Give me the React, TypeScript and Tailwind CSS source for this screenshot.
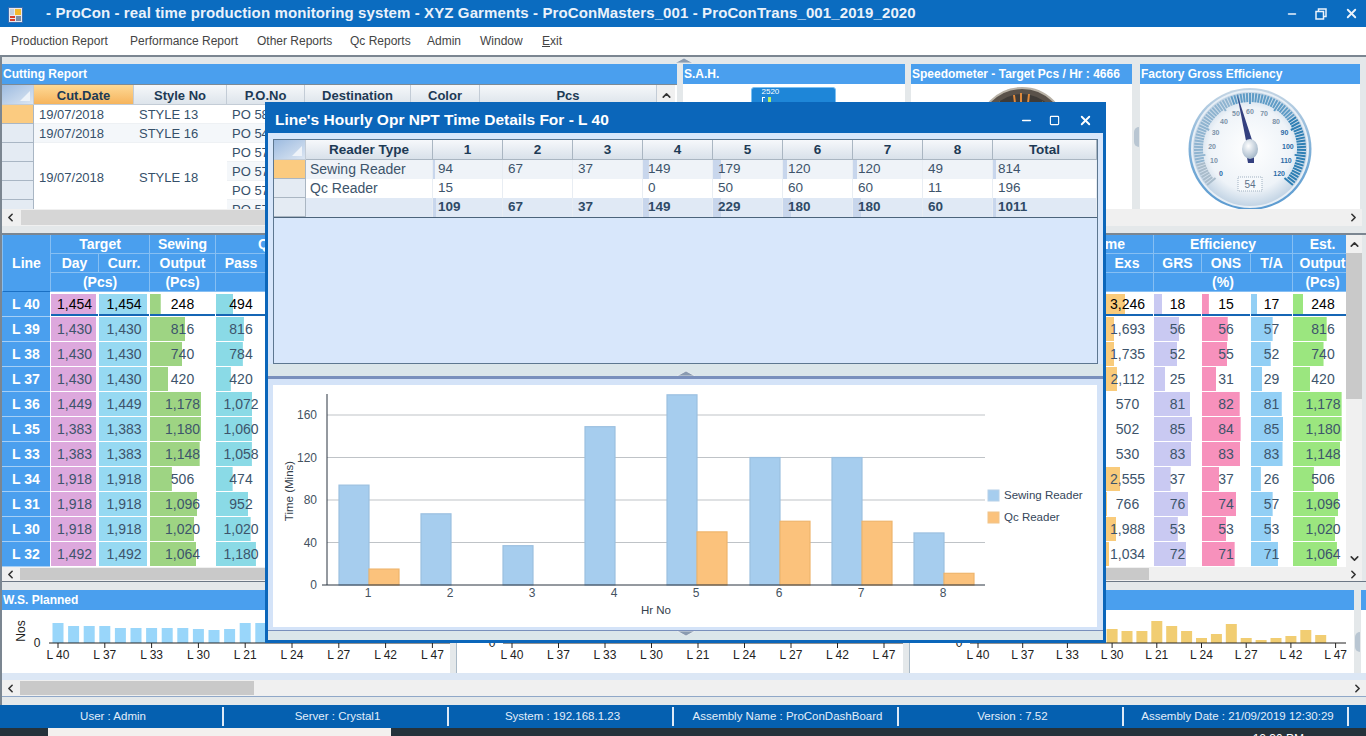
import { ChevronDown, ChevronLeft, ChevronRight, ChevronUp, Minus, Square, X } from 'lucide-react';

const lines = ['L 40', 'L 39', 'L 38', 'L 37', 'L 36', 'L 35', 'L 33', 'L 34', 'L 31', 'L 30', 'L 32'];
const day = [1454, 1430, 1430, 1430, 1449, 1383, 1383, 1918, 1918, 1918, 1492];
const sewing = [248, 816, 740, 420, 1178, 1180, 1148, 506, 1096, 1020, 1064];
const pass = [494, 816, 784, 420, 1072, 1060, 1058, 474, 952, 1020, 1180];
const exs = [3246, 1693, 1735, 2112, 570, 502, 530, 2555, 766, 1988, 1034];
const grs = [18, 56, 52, 25, 81, 85, 83, 37, 76, 53, 72];
const ons = [15, 56, 55, 31, 82, 84, 83, 37, 74, 53, 71];
const ta = [17, 57, 52, 29, 81, 85, 83, 26, 57, 53, 71];

const hourly = {
  sewing: [94, 67, 37, 149, 179, 120, 120, 49, 814],
  qc: [15, null, null, 0, 50, 60, 60, 11, 196],
  total: [109, 67, 37, 149, 229, 180, 180, 60, 1011],
};

const menus = ['Production Report', 'Performance Report', 'Other Reports', 'Qc Reports', 'Admin', 'Window'];
const statusItems = ['User : Admin', 'Server : Crystal1', 'System : 192.168.1.23', 'Assembly Name : ProConDashBoard', 'Version : 7.52', 'Assembly Date : 21/09/2019 12:30:29'];
const axisLabels = ['L 40', 'L 37', 'L 33', 'L 30', 'L 21', 'L 24', 'L 27', 'L 42', 'L 47'];

const wsBars = [20, 17, 17, 17, 15, 15, 15, 15, 15, 14, 13, 14, 20, 20, 18, 18, 16, 16, 15, 15, 15, 14, 14, 14, 14, 14, 14];
const thirdBars = [10, 10, 10, 10, 10, 10, 10, 10, 10, 14, 12, 12, 22, 17, 12, 5, 9, 19, 5, 3, 5, 7, 13, 8];

function fmt(n: number) {
  return n.toLocaleString('en-US');
}

function barFill(color: string, px: number) {
  return { background: `linear-gradient(${color},${color}) no-repeat left top / ${px}px 100%` };
}

function PanelTitle({ children }: { children?: React.ReactNode }) {
  return <div className="h-[20px] bg-[#4a9fee] text-white text-[12px] font-bold leading-[20px] pl-px whitespace-nowrap overflow-hidden">{children}</div>;
}

function HScroll({ thumbLeft, thumbWidth, thumbColor = 'bg-[#c9c9c9]', height = 'h-[17px]' }: { thumbLeft: number; thumbWidth: number; thumbColor?: string; height?: string }) {
  return (
    <div className={`${height} bg-[#f0f0f0] flex items-center text-[#333]`}>
      <div className="w-[17px] flex justify-center"><ChevronLeft size={13} strokeWidth={3} /></div>
      <div className="flex-1 flex h-full py-px">
        <div style={{ width: thumbLeft }} />
        <div className={thumbColor} style={{ width: thumbWidth }} />
      </div>
      <div className="w-[17px] flex justify-center"><ChevronRight size={13} strokeWidth={3} /></div>
    </div>
  );
}

function SideTab() {
  return (
    <div className="h-full flex items-center justify-center w-full">
      <div className="w-[5px] h-[20px] bg-[#b9c6d2] rounded-l-full" />
    </div>
  );
}

function SplitArrow({ down = false }: { down?: boolean }) {
  return (
    <svg width="20" height="6" viewBox="0 0 20 6">
      <path d={down ? 'M1 0 L10 5 L19 0 Z' : 'M1 6 L10 1 L19 6 Z'} fill="#8a9bb0" stroke="#f4f6f8" strokeWidth="0.7" />
    </svg>
  );
}

function CutHeader({ children, active = false }: { children?: React.ReactNode; active?: boolean }) {
  return (
    <div className={`h-[20px] text-center text-[13px] font-bold leading-[21px] border-r border-[#c3ccd6] border-b ${active ? 'bg-gradient-to-b from-[#fdd995] to-[#f6b45c] text-[#1d3a55]' : 'bg-gradient-to-b from-[#f6f8fa] to-[#dde4eb] text-[#1d3a55]'}`}>
      {children}
    </div>
  );
}

function RowHeadCorner() {
  return (
    <div className="bg-gradient-to-br from-[#9dbbe0] to-[#dce6f2] border-r border-b border-[#c3ccd6] flex items-end justify-end pr-[3px] pb-[3px]">
      <svg width="10" height="10" viewBox="0 0 10 10"><path d="M10 0 V10 H0 Z" fill="#eef3f9" /></svg>
    </div>
  );
}

function CuttingGrid() {
  const cell = 'h-[19px] text-[13px] leading-[19px] text-[#36506a] pl-[5px] border-b border-[#eef1f4] whitespace-nowrap overflow-hidden';
  const head = 'h-[19px] bg-[#e4ebf3] border-r border-b border-[#a9b6c4]';
  return (
    <div className="flex-1 min-h-0 overflow-hidden bg-white grid grid-cols-[32px_100px_93px_78px_106px_69px_177px_18px] auto-rows-min">
      <RowHeadCorner />
      <CutHeader active>Cut.Date</CutHeader>
      <CutHeader>Style No</CutHeader>
      <CutHeader>P.O.No</CutHeader>
      <CutHeader>Destination</CutHeader>
      <CutHeader>Color</CutHeader>
      <CutHeader>Pcs</CutHeader>
      <div className="h-[20px] bg-[#f0f0f0] flex items-center justify-center text-[#333]"><ChevronUp size={13} strokeWidth={3} /></div>

      <div className="h-[19px] bg-[#fbcb80] border-r border-b border-[#a9b6c4]" />
      <div className={cell}>19/07/2018</div>
      <div className={cell}>STYLE 13</div>
      <div className={cell}>PO 5812</div>
      <div className="col-span-4" />

      <div className={head} />
      <div className={`${cell} bg-[#f4f7fa]`}>19/07/2018</div>
      <div className={`${cell} bg-[#f4f7fa]`}>STYLE 16</div>
      <div className={`${cell} bg-[#f4f7fa]`}>PO 5401</div>
      <div className="col-span-4" />

      <div className={head} />
      <div className="row-span-4 text-[13px] text-[#36506a] pl-[5px] pb-[6px] flex items-center">19/07/2018</div>
      <div className="row-span-4 text-[13px] text-[#36506a] pl-[5px] pb-[6px] flex items-center">STYLE 18</div>
      <div className={cell}>PO 5701</div>
      <div className="col-span-4" />
      <div className={head} />
      <div className={`${cell} bg-[#f4f7fa]`}>PO 5702</div>
      <div className="col-span-4" />
      <div className={head} />
      <div className={cell}>PO 5703</div>
      <div className="col-span-4" />
      <div className={head} />
      <div className={`${cell} bg-[#f4f7fa]`}>PO 5704</div>
      <div className="col-span-4" />
    </div>
  );
}

function Gauge() {
  const labels = [0, 10, 20, 30, 40, 50, 60, 70, 80, 90, 100, 110, 120];
  const cx = 62;
  const cy = 63;
  const polar = (v: number, r: number) => {
    const a = ((-130 + (v * 260) / 120) * Math.PI) / 180;
    return { x: cx + r * Math.sin(a), y: cy - r * Math.cos(a) };
  };
  const ticks = Array.from({ length: 81 }, (_, i) => i * 1.5);
  const tickColor = (v: number) => {
    if (v < 12) return '#a9bccb';
    if (v < 50) return '#8fb4d0';
    if (v < 85) return '#5f9cc6';
    return '#2f7fb4';
  };
  return (
    <svg width="124" height="124" viewBox="0 0 124 124">
      <defs>
        <radialGradient id="gaugeFace" cx="50%" cy="50%" r="52%">
          <stop offset="0%" stopColor="#ffffff" />
          <stop offset="70%" stopColor="#eef3f8" />
          <stop offset="100%" stopColor="#bdd0e2" />
        </radialGradient>
        <linearGradient id="gaugeRim" x1="0" y1="0" x2="0" y2="1">
          <stop offset="0%" stopColor="#c6d6e4" />
          <stop offset="50%" stopColor="#7fb0d8" />
          <stop offset="100%" stopColor="#5a9ad0" />
        </linearGradient>
        <radialGradient id="gaugeHub" cx="40%" cy="35%" r="70%">
          <stop offset="0%" stopColor="#ffffff" />
          <stop offset="100%" stopColor="#9fb3c6" />
        </radialGradient>
      </defs>
      <ellipse cx={cx} cy={cy} rx="61.5" ry="61" fill="url(#gaugeRim)" />
      <ellipse cx={cx} cy={cy} rx="59" ry="59" fill="#e8eff6" />
      <ellipse cx={cx} cy={cy} rx="57" ry="57" fill="url(#gaugeFace)" />
      {ticks.map((v) => {
        const a = polar(v, 56);
        const b = polar(v, v % 15 === 0 ? 45 : 47);
        return <line key={v} x1={a.x} y1={a.y} x2={b.x} y2={b.y} stroke={tickColor(v)} strokeWidth="2" />;
      })}
      {labels.map((v) => {
        const p = polar(v, 38);
        return <text key={v} x={p.x} y={p.y + 2.5} textAnchor="middle" fontSize="7" fontWeight="700" fill={v >= 90 || v === 0 ? '#2b6ba6' : '#7d93a8'}>{v}</text>;
      })}
      <polygon points="49,8 59,60 66,60" fill="#34407f" />
      <polygon points="58,66 66,66 66,77 60,77" fill="#34407f" />
      <ellipse cx={cx} cy={cy} rx="8" ry="10" fill="url(#gaugeHub)" />
      <rect x="50" y="91" width="24" height="14" fill="#f6f9fc" stroke="#9fb0c0" strokeDasharray="1 1" />
      <text x="62" y="102" textAnchor="middle" fontSize="10" fill="#5c7189">54</text>
    </svg>
  );
}

function SpeedoDome() {
  return (
    <svg width="90" height="20" viewBox="0 0 90 20">
      <circle cx="45" cy="45" r="44" fill="#5a524a" stroke="#b9b2a6" strokeWidth="2" />
      <circle cx="45" cy="45" r="38" fill="#3f3b37" />
      <path d="M37 8 L38 16 M44 6 L44 16 M52 7 L51 16" stroke="#e08a3c" strokeWidth="2" />
      <path d="M22 15 L26 18 M66 15 L62 18" stroke="#b9b058" strokeWidth="1.5" />
    </svg>
  );
}

function MainGrid() {
  const hdBase = 'h-[19px] bg-[#4a9fee] text-white text-[14px] font-bold leading-[19px] border-l border-b border-[#86bff3] whitespace-nowrap overflow-hidden';
  const hd = `${hdBase} text-center`;
  const columns = (i: number) => [
    { v: day[i], px: 45, color: '#dda8dd' },
    { v: day[i], px: 48, color: '#96d9f2' },
    { v: sewing[i], px: sewing[i] * 0.0433, color: '#9ed483' },
    { v: pass[i], px: pass[i] * 0.033 + 1, color: '#8adae6' },
  ];
  const rightCols = (i: number) => [
    { v: exs[i], px: exs[i] * 0.0071, color: '#f9cb7b' },
    { v: grs[i], px: grs[i] * 0.45, color: '#c9c9f2' },
    { v: ons[i], px: ons[i] * 0.46, color: '#f791bc' },
    { v: ta[i], px: ta[i] * 0.38, color: '#92cff5' },
    { v: sewing[i], px: sewing[i] * 0.0413, color: '#9be67f', shift: true },
  ];
  const numCell = (c: { v: number; px: number; color: string; shift?: boolean }, selected: boolean, key: string) => (
    <div key={key} className={`h-[25px] pb-px pl-px bg-white ${selected ? 'pt-[2px]' : ''}`}>
      <div
        className={`h-full text-center text-[14px] ${c.shift ? 'pl-[7px]' : ''} ${selected ? 'leading-[20px] text-black border-b-2 border-[#1566b5]' : 'leading-[24px] text-[#3d546b]'}`}
        style={barFill(c.color, c.px)}
      >
        {fmt(c.v)}
      </div>
    </div>
  );
  return (
    <div className="flex h-[332px]">
      <div className="w-[1344px] grid grid-cols-[48px_48px_51px_66px_51px_1fr_52px_48px_49px_42px_54px] auto-rows-min overflow-hidden bg-white">
        <div className={`${hd} row-span-3 !h-[57px] !leading-[57px] border-b-[#1a70c4]`}>Line</div>
        <div className={`${hd} col-span-2`}>Target</div>
        <div className={hd}>Sewing</div>
        <div className={`${hdBase} col-span-2 text-left pl-[42px]`}>Qc</div>
        <div className={`${hdBase} flex justify-end pr-[28px] border-l-0`}><span>Time</span></div>
        <div className={`${hd} col-span-3`}>Efficiency</div>
        <div className={`${hd} pl-[6px]`}>Est.</div>

        <div className={hd}>Day</div>
        <div className={hd}>Curr.</div>
        <div className={hd}>Output</div>
        <div className={hd}>Pass</div>
        <div className={hd} />
        <div className={`${hd} border-l-0`}>Exs</div>
        <div className={hd}>GRS</div>
        <div className={hd}>ONS</div>
        <div className={hd}>T/A</div>
        <div className={`${hd} pl-[6px]`}>Output</div>

        <div className={`${hd} col-span-2`}>(Pcs)</div>
        <div className={hd}>(Pcs)</div>
        <div className={`${hd} col-span-3`} />
        <div className={`${hd} col-span-3`}>(%)</div>
        <div className={`${hd} pl-[6px]`}>(Pcs)</div>

        {lines.map((line, i) => (
          <div key={line} className="contents">
            <div className="h-[25px] bg-[#4a9fee] text-white text-[14px] font-bold leading-[24px] text-center border-b border-[#a5cff6]">{line}</div>
            {columns(i).map((c, j) => numCell(c, i === 0, `l${j}`))}
            <div className="h-[25px]" />
            {rightCols(i).map((c, j) => numCell(c, i === 0, `r${j}`))}
          </div>
        ))}
      </div>
      <div className="w-[16px] bg-[#f0f0f0] flex flex-col items-center text-[#333]">
        <div className="h-[18px] flex items-center"><ChevronUp size={13} strokeWidth={3} /></div>
        <div className="w-full h-[146px] bg-[#c9c9c9]" />
        <div className="flex-1" />
        <div className="h-[18px] flex items-center"><ChevronDown size={13} strokeWidth={3} /></div>
      </div>
    </div>
  );
}

function WsChart({ width, first, step, bars, color, axisEnd, zeroX, zeroLabelX }: { width: number; first: number; step: number; bars: number[]; color: string; axisEnd: number; zeroX: number; zeroLabelX: number }) {
  return (
    <svg width={width} height={63} viewBox={`0 0 ${width} 63`} className="block bg-white" fontFamily="Liberation Sans">
      <text x={zeroLabelX} y={37} textAnchor="middle" fontSize="12" fill="#222">0</text>
      {bars.map((h, i) => (
        <rect key={i} x={first + i * step - 5.5} y={33 - h} width={11} height={h} fill={color} />
      ))}
      <line x1={zeroX} x2={axisEnd} y1={33} y2={33} stroke="#222" />
      {axisLabels.map((l, i) => {
        const x = first + i * 3 * step;
        return (
          <g key={l}>
            <line x1={x} x2={x} y1={33} y2={38} stroke="#222" />
            <text x={x} y={49} textAnchor="middle" fontSize="12" fill="#222">{l}</text>
          </g>
        );
      })}
    </svg>
  );
}

function hourBar(v: number | null) {
  if (!v || v < 90) return 0;
  if (v > 300) return 3;
  return Math.min(8, (v - 60) / 15);
}

function HourlyGrid() {
  const hd = 'h-[20px] bg-gradient-to-b from-[#f6f8fb] to-[#d9e1ea] border-r border-b border-[#aab6c2] text-center text-[13.5px] font-bold leading-[20px] text-[#1d3a55]';
  const num = (v: number | null, key: number, tint: string, bold = false, bars = true) => (
    <div
      key={key}
      className={`h-[19px] border-r border-[#e8edf3] pl-[5px] text-[13.5px] leading-[18px] ${bold ? 'font-bold text-[#2f4a66]' : 'text-[#3d546b]'}`}
      style={{ background: `linear-gradient(#c8d6ec,#c8d6ec) no-repeat left / ${bars ? hourBar(v) : 0}px 100%, ${tint}` }}
    >
      {v}
    </div>
  );
  const rowHead = 'h-[19px] border-r border-b border-[#aab6c2]';
  return (
    <div className="h-[225px] bg-[#d8e7fb] border border-[#5d7790] flex flex-col">
      <div className="grid grid-cols-[32px_127px_70px_70px_70px_70px_70px_70px_70px_70px_1fr] auto-rows-min border-b border-[#4c647b]">
        <RowHeadCorner />
        <div className={hd}>Reader Type</div>
        {[1, 2, 3, 4, 5, 6, 7, 8].map((n) => <div key={n} className={hd}>{n}</div>)}
        <div className={hd}>Total</div>

        <div className={`${rowHead} bg-[#fbcb80]`} />
        <div className="h-[19px] bg-[#eff3f8] pl-[4px] text-[14px] leading-[18px] text-[#3d546b] border-r border-[#e8edf3]">Sewing Reader</div>
        {hourly.sewing.map((v, i) => num(v, i, '#eff3f8'))}

        <div className={`${rowHead} bg-[#e4ebf3]`} />
        <div className="h-[19px] bg-white pl-[4px] text-[14px] leading-[18px] text-[#3d546b] border-r border-[#e8edf3]">Qc Reader</div>
        {hourly.qc.map((v, i) => num(v, i, '#ffffff', false, false))}

        <div className={`${rowHead} bg-[#e4ebf3]`} />
        <div className="h-[19px] bg-[#e0e9f5] border-r border-[#e8edf3]" />
        {hourly.total.map((v, i) => num(v, i, '#e0e9f5', true))}
      </div>
    </div>
  );
}

function HourlyChart() {
  const y0 = 585;
  const toY = (v: number) => y0 - v * 1.0625;
  const centers = [369, 451, 533, 615, 697, 780, 862, 944];
  return (
    <svg width="824" height="242" viewBox="273 385 824 242" className="block bg-white" fontFamily="Liberation Sans">
      {[40, 80, 120, 160].map((t) => (
        <line key={t} x1={327} x2={985} y1={toY(t)} y2={toY(t)} stroke="#bfc3c7" />
      ))}
      {centers.map((c, i) => (
        <g key={c}>
          <rect x={c - 30} y={toY(hourly.sewing[i] as number)} width={30} height={(hourly.sewing[i] as number) * 1.0625} fill="#a6cdee" stroke="#9cc0e0" strokeWidth="1.2" />
          {(hourly.qc[i] ?? 0) > 0 && (
            <rect x={c} y={toY(hourly.qc[i] as number)} width={30} height={(hourly.qc[i] as number) * 1.0625} fill="#fbc27c" stroke="#efb56d" strokeWidth="1.2" />
          )}
          <text x={c - 1} y={597} textAnchor="middle" fontSize="12" fill="#44525f">{i + 1}</text>
        </g>
      ))}
      <line x1={327} x2={327} y1={394} y2={585} stroke="#2b3440" />
      <line x1={322} x2={985} y1={585} y2={585} stroke="#2b3440" />
      {[0, 40, 80, 120, 160].map((t) => (
        <text key={t} x={317} y={toY(t) + 4} textAnchor="end" fontSize="12" fill="#44525f">{t}</text>
      ))}
      <text x={0} y={0} transform="translate(293 491) rotate(-90)" textAnchor="middle" fontSize="11.5" fill="#35414d">Time (Mins)</text>
      <text x={656} y={614} textAnchor="middle" fontSize="11.5" fill="#35414d">Hr No</text>
      <rect x={988} y={490} width={11} height={11} fill="#a6cdee" stroke="#b6d0e8" />
      <text x={1004} y={499} fontSize="11.5" fill="#35465a">Sewing Reader</text>
      <rect x={988} y={512} width={11} height={11} fill="#fbc27c" stroke="#f0c48a" />
      <text x={1004} y={521} fontSize="11.5" fill="#35465a">Qc Reader</text>
    </svg>
  );
}

function HourlyDialog() {
  return (
    <div className="absolute left-[265px] top-[102px] w-[841px] h-[541px] border-[3px] border-t-0 border-[#0b66ba] bg-[#dbe6ea] flex flex-col">
      <div className="h-[31px] bg-[#0b66ba] flex items-center text-white shrink-0 pt-[5px]">
        <span className="pl-[7px] text-[15.5px] font-bold flex-1 whitespace-nowrap">Line's Hourly Opr NPT Time Details For - L 40</span>
        <Minus size={13} strokeWidth={3} className="mr-[16px]" />
        <Square size={11} strokeWidth={2.5} className="mr-[18px]" />
        <X size={15} strokeWidth={3} className="mr-[10px]" />
      </div>
      <div className="h-[6px] bg-[#d8e7fb] shrink-0" />
      <div className="bg-[#d8e7fb] px-[5px] shrink-0"><HourlyGrid /></div>
      <div className="h-[12px] flex items-end justify-center shrink-0"><SplitArrow /></div>
      <div className="h-[3px] bg-[#7a90bc] shrink-0" />
      <div className="h-[6px] bg-[#d4e3f8] shrink-0" />
      <div className="bg-[#d4e3f8] px-[5px] shrink-0"><HourlyChart /></div>
      <div className="h-[4px] bg-[#d4e3f8] border-b border-[#7a90bc] shrink-0" />
      <div className="flex-1 flex justify-center items-start"><SplitArrow down /></div>
    </div>
  );
}

export default function App() {
  return (
    <div className="relative w-[1366px] h-[736px] overflow-hidden flex flex-col bg-white font-['Liberation_Sans',Arial,sans-serif]">
      {/* title bar */}
      <div className="h-[27px] bg-[#0b6cc0] flex items-center text-[#eaf2fb] shrink-0">
        <svg width="15" height="16" viewBox="0 0 15 16" className="ml-[8px] mt-[2px]">
          <rect width="15" height="16" fill="#e8eaf0" />
          <rect x="0.5" y="0.5" width="14" height="15" fill="none" stroke="#3e6fb0" />
          <rect x="7" y="2" width="6" height="6" fill="#f3b92f" />
          <rect x="2" y="2" width="4" height="6" fill="#c4cfe0" />
          <rect x="2" y="9" width="5" height="2" fill="#d8402c" />
          <rect x="2" y="12" width="5" height="2" fill="#d8402c" />
          <rect x="8" y="9" width="5" height="5" fill="#7c8da6" />
        </svg>
        <span className="ml-[23px] flex-1 text-[15px] font-bold whitespace-nowrap tracking-[0.107px]">- ProCon - real time production monitoring system - XYZ Garments - ProConMasters_001 - ProConTrans_001_2019_2020</span>
        <Minus size={12} strokeWidth={3} className="mr-[17px]" />
        <svg width="12" height="12" viewBox="0 0 12 12" fill="none" stroke="currentColor" strokeWidth="1.5" className="mr-[17px]">
          <rect x="1" y="3.5" width="7.5" height="7.5" />
          <path d="M3.5 3.5 V1 H11 V8.5 H8.5" />
        </svg>
        <X size={15} strokeWidth={3} className="mr-[7px]" />
      </div>

      {/* menu */}
      <div className="h-[28px] bg-white grid grid-cols-[119px_127px_93px_77px_53px_62px_auto] items-center pl-[11px] text-[12px] text-[#444] shrink-0">
        {menus.map((m) => <span key={m} className="whitespace-nowrap">{m}</span>)}
        <span><span className="underline">E</span>xit</span>
      </div>

      <div className="flex-1 min-h-0 border-t-2 border-l-2 border-[#7b8691] bg-[#e4e8ea] flex flex-col">
        <div className="h-[7px] flex justify-start pl-[672px] items-start"><SplitArrow /></div>

        {/* top panels */}
        <div className="h-[145px] flex w-[1360px]">
          <div className="w-[675px] flex flex-col">
            <PanelTitle>Cutting Report</PanelTitle>
            <div className="h-px bg-[#7d8a95]" />
            <CuttingGrid />
          </div>
          <div className="w-[6px]" />
          <div className="w-[222px] flex flex-col">
            <PanelTitle>S.A.H.</PanelTitle>
            <div className="flex-1 bg-white flex justify-center pt-[3px] pr-[2px]">
              <div className="w-[85px] h-[60px] rounded-[3px] bg-[#1e86d8] border border-[#7cc0f2] pl-[10px]">
                <div className="text-[8px] leading-[8px] text-white">2520</div>
                <div className="flex h-[8px] mt-px gap-[3px]">
                  <div className="w-[3px] border-l border-t border-white" />
                  <div className="w-[3px] bg-[#b6ef6a]" />
                </div>
              </div>
            </div>
          </div>
          <div className="w-[6px]" />
          <div className="w-[221px] flex flex-col">
            <PanelTitle>Speedometer - Target Pcs / Hr : 4666</PanelTitle>
            <div className="flex-1 bg-white flex justify-center pt-[3px]">
              <SpeedoDome />
            </div>
          </div>
          <div className="w-[8px]"><SideTab /></div>
          <div className="w-[220px] flex flex-col">
            <PanelTitle>Factory Gross Efficiency</PanelTitle>
            <div className="flex-1 bg-white flex justify-center pt-[2px] overflow-hidden"><Gauge /></div>
          </div>
        </div>

        <div className="w-[1360px]"><HScroll thumbLeft={2} thumbWidth={600} thumbColor="bg-[#d6d6d6]" /></div>
        <div className="h-[7px]" />
        <div className="h-[2px] bg-[#7b8691]" />

        {/* line wise grid */}
        <div className="w-[1360px]">
          <MainGrid />
          <HScroll thumbLeft={1} thumbWidth={1129} height="h-[14px]" />
        </div>
        <div className="h-px bg-[#6b7785]" />
        <div className="h-[8px]" />

        {/* W.S. Planned */}
        <div className="flex h-[83px]">
          <div className="w-[1352px] flex flex-col">
            <PanelTitle>W.S. Planned</PanelTitle>
            <div className="flex gap-[6px]">
              <div className="relative">
                <WsChart width={448} first={56} step={15.6} bars={wsBars} color="#99d6fa" axisEnd={448} zeroX={47} zeroLabelX={35} />
                <span className="absolute left-[8px] top-[14px] -rotate-90 text-[12px] leading-[14px] text-[#222]">Nos</span>
              </div>
              <div className="border-l border-[#a9b9c6]"><WsChart width={446} first={55} step={15.5} bars={wsBars} color="#f2c6c6" axisEnd={446} zeroX={46} zeroLabelX={35} /></div>
              <div className="border-l border-[#a9b9c6]"><WsChart width={444} first={68} step={14.9} bars={thirdBars} color="#f1cd72" axisEnd={436} zeroX={60} zeroLabelX={49} /></div>
            </div>
          </div>
          <div className="w-[7px] pt-[20px]"><SideTab /></div>
          <div className="flex-1 flex flex-col">
            <div className="h-[20px] bg-[#4a9fee]" />
            <div className="flex-1 bg-white" />
          </div>
        </div>
        <div className="h-[7px] bg-[#dce7f5]" />
        <HScroll thumbLeft={1} thumbWidth={234} height="h-[16px]" />
        <div className="h-px bg-[#90a8c8]" />
        <div className="flex-1" />
      </div>

      {/* status bar */}
      <div className="h-[23px] bg-[#0560b0] grid grid-cols-[224px_225px_225px_225px_225px_225px_1fr] items-center text-[11.5px] text-[#e3eefa] shrink-0">
        {statusItems.map((s) => (
          <div key={s} className="h-[19px] leading-[19px] text-center pl-[4px] border-r-2 border-[#dfeaf6] whitespace-nowrap">{s}</div>
        ))}
      </div>

      {/* windows taskbar peeking out */}
      <div className="h-[8px] bg-[#25323b] flex overflow-hidden shrink-0">
        <div className="ml-[48px] w-[343px] bg-[#f3f0ee]" />
        <div className="ml-auto mr-[62px] pt-[5px] text-[12px] leading-[12px] text-white">12:30 PM</div>
      </div>

      <HourlyDialog />
    </div>
  );
}
